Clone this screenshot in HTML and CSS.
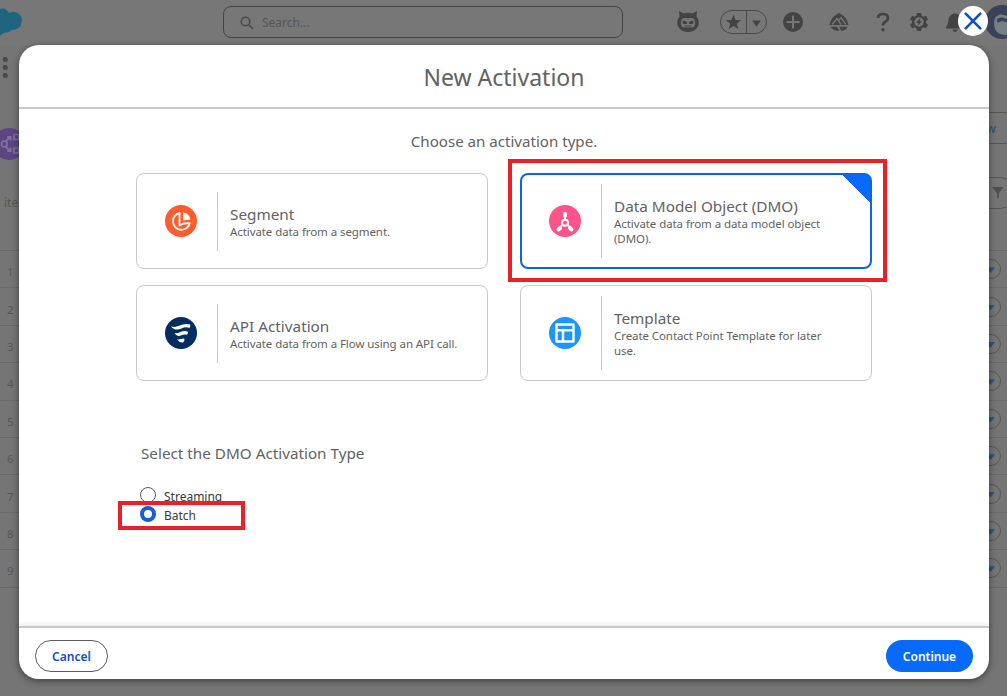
FILE: index.html
```html
<!DOCTYPE html>
<html lang="en">
<head>
  <meta charset="utf-8">
  <title>New Activation</title>
  <link rel="stylesheet" href="styles.css">
</head>
<body>
<div class="page">
  <div class="topbar">
    <svg class="cloud" width="24" height="40" viewBox="0 0 24 40"><path d="M0 9Q6 7 9 13Q15 10 19 14Q23 17 21.500 23Q20 30 12 30Q8 33 4 33Q2 34 0 36Z"/></svg>
    <div class="search">
      <svg width="14" height="14" viewBox="0 0 14 14"><circle cx="5.500" cy="5.500" r="4.300"/><path d="M8.700 8.700L12.800 12.800"/></svg>
      <span>Search...</span>
    </div>
    <div class="tools">
      <svg class="tool-bot" width="24" height="24" viewBox="0 0 24 24"><path d="M3 1L7.500 3.500Q12 2 16.500 3.500L21 1L20.500 6.500Q23.500 10.500 22.500 15Q20 22 12 22Q4 22 1.500 15Q.5 10.500 3.500 6.500Z"/><rect class="cut" x="5" y="8" width="14" height="9.500" rx="4"/><path d="M6.500 10.500L11 11.500V14H7ZM17.500 10.500L13 11.500V14H17Z"/><path d="M8.500 15.500h7v1h-7z"/></svg>
      <div class="fav">
        <svg width="25" height="22" viewBox="0 0 25 22"><path d="M12.500 3.500L14.600 9L20 9.200L15.800 12.700L17.300 18L12.500 15L7.700 18L9.200 12.700L5 9.200L10.400 9Z"/></svg>
        <svg class="fav-more" width="20" height="22" viewBox="0 0 20 22"><path d="M5.500 9.500h9l-4.500 6.500z"/></svg>
      </div>
      <svg class="tool-plus" width="22" height="22" viewBox="0 0 22 22"><circle cx="11" cy="11" r="10"/><path class="cutline" d="M11 4.500v13M4.500 11h13"/></svg>
      <svg class="tool-trail" width="20" height="20" viewBox="0 0 20 20"><path d="M.5 13Q2 4.500 10 1Q18 4.500 19.500 13ZM1.500 14.800h6.500l2.500 4.200Q4 19 1.500 14.800ZM10 14.800h8.500Q16.500 18.500 12.500 19Z"/><path class="cutline thin" d="M3.200 12.500L8 6.500L12 12.500M9.800 8L12 5.800L16.800 12.500"/></svg>
      <svg class="tool-help" width="14" height="20" viewBox="0 0 14 20"><path class="line" d="M2 6Q2 2 7 2Q12 2 12 6Q12 8 9.500 9.700Q7 11 7 13.500"/><circle cx="7" cy="17.700" r="1.800"/></svg>
      <svg class="tool-gear" width="20" height="20" viewBox="0 0 20 20"><path d="M8 1h4l.6 2.700 1.800 1L17 3.800l2 3.400L17 9v2l2 1.800-2 3.400-2.600-.9-1.800 1L12 19H8l-.6-2.700-1.800-1L3 16.200l-2-3.400L3 11V9L1 7.200l2-3.400 2.600.9 1.800-1z"/><circle class="cut" cx="10" cy="10" r="4.700"/><path d="M11.500 6L7 10.700h2.500L8.500 14L13 9.200h-2.500z"/></svg>
      <svg class="tool-bell" width="20" height="20" viewBox="0 0 20 20"><path d="M1 15Q3 13 3.500 8Q4 2 10 1.500Q16 2 16.500 8Q17 13 19 15V16.500H1ZM7.500 17.500h5Q12 20 10 20Q8 20 7.500 17.500Z"/></svg>
      <svg class="avatar" width="22" height="36" viewBox="0 0 22 36"><circle cx="17" cy="18" r="17"/><path class="face" d="M22 12Q14 8 10 14Q8 20 10.500 26Q13 31 22 31Z"/><path d="M12 15Q16 12 22 15V18.500Q16 16 12.500 19Z"/></svg>
    </div>
  </div>
  <div class="navbar"><svg width="8" height="22" viewBox="0 0 8 22"><circle cx="5.300" cy="2.500" r="2.500"/><circle cx="5.300" cy="10.500" r="2.500"/><circle cx="5.300" cy="18.500" r="2.500"/></svg></div>
  <div class="list-head">
    <svg class="object" width="28" height="32" viewBox="0 0 28 32"><circle cx="10" cy="16" r="16"/><path d="M2.500 16a2.800 2.800 0 1 0 5.600 0a2.800 2.800 0 1 0-5.600 0M7 13L11.500 9M8 8.800h3.800V12.500M7 19L11.500 23M8 23.200h3.800V19.500M15 6.500h5v5h-5zM15 20h5v5h-5z"/></svg>
    <div class="pill new">w</div>
  </div>
  <div class="list-tools">
    <span>items</span>
    <div class="pill"><svg width="14" height="14" viewBox="0 0 14 14"><path d="M1 1h12L8 7v5H6V7z"/></svg></div>
  </div>
  <div class="rows">
    <div class="row"><span>1</span><i class="row-menu"></i></div>
    <div class="row"><span>2</span><i class="row-menu"></i></div>
    <div class="row"><span>3</span><i class="row-menu"></i></div>
    <div class="row"><span>4</span><i class="row-menu"></i></div>
    <div class="row"><span>5</span><i class="row-menu"></i></div>
    <div class="row"><span>6</span><i class="row-menu"></i></div>
    <div class="row"><span>7</span><i class="row-menu"></i></div>
    <div class="row"><span>8</span><i class="row-menu"></i></div>
    <div class="row"><span>9</span><i class="row-menu"></i></div>
  </div>
</div>

<div class="modal">
  <div class="modal-header">New Activation</div>
  <div class="modal-body">
    <div class="prompt">Choose an activation type.</div>
    <div class="cards">
      <div class="card">
        <svg width="32" height="32" viewBox="0 0 32 32"><circle cx="16" cy="16" r="16" fill="#ff5d2d"/><path d="M14.500 8A8.500 8.500 0 1 0 24.700 18.200L18.500 18.500L14.500 20.500Z" fill="none" stroke="#fff" stroke-width="1.800" stroke-linejoin="round"/><path d="M18 7.200Q24.500 8.500 25.300 14.600L18 15.600Z" fill="#fff"/></svg>
        <div class="card-text"><div class="card-title">Segment</div><div class="card-desc">Activate data from a segment.</div></div>
      </div>
      <div class="marked">
        <div class="card tall selected">
          <svg width="32" height="32" viewBox="0 0 32 32"><circle cx="16" cy="16" r="16" fill="#ff538a"/><g stroke="#fff" fill="none"><path d="M16 8V14M13.500 20L9 23.500M18.500 20L23 23.500" stroke-width="2"/><circle cx="16" cy="17.700" r="3" stroke-width="1.900"/><path d="M16 8.700V10.500M9.500 24.300L11 23.200M22.500 24.300L21 23.200" stroke-width="4" stroke-linecap="round"/></g></svg>
          <div class="card-text"><div class="card-title">Data Model Object (DMO)</div><div class="card-desc">Activate data from a data model object (DMO).</div></div>
        </div>
      </div>
      <div class="card">
        <svg width="32" height="32" viewBox="0 0 32 32"><circle cx="16" cy="16" r="16" fill="#032d60"/><path d="M6 9.200Q9 10.800 14 8.800Q20 5.800 25 7.500Q26 8.500 24.500 11Q20.500 9.500 16.500 11.500Q9.500 14.500 6 9.200ZM9.500 16Q12 16.500 15 15.200Q19.500 13 23 14.800Q23.500 16 22 17.700Q19 17 16 18.500Q11.500 20.200 9.500 16ZM12 22.200Q14 22.700 16 22Q18.500 21 19.500 22Q19.700 24 18 25.500Q14.500 26 12 22.200Z" fill="#fff"/></svg>
        <div class="card-text"><div class="card-title">API Activation</div><div class="card-desc">Activate data from a Flow using an API call.</div></div>
      </div>
      <div class="card tall">
        <svg width="32" height="32" viewBox="0 0 32 32"><circle cx="16" cy="16" r="16" fill="#1b96ff"/><path d="M7.500 7.500h17v17h-17zM7.500 13.200h17M14 13.200v11.300" fill="none" stroke="#fff" stroke-width="2.400" stroke-linejoin="round"/></svg>
        <div class="card-text"><div class="card-title">Template</div><div class="card-desc">Create Contact Point Template for later use.</div></div>
      </div>
    </div>
    <div class="type">
      <div class="type-label">Select the DMO Activation Type</div>
      <div class="option"><span class="radio"></span>Streaming</div>
      <div class="option marked"><span class="radio checked"></span>Batch</div>
    </div>
  </div>
  <div class="modal-footer">
    <button class="btn">Cancel</button>
    <button class="btn primary">Continue</button>
  </div>
</div>
<button class="close" aria-label="Close"><svg width="18" height="18" viewBox="0 0 18 18"><path d="M1.700 1.700L16.300 16.300M16.300 1.700L1.700 16.300"/></svg></button>
</body>
</html>
```
FILE: styles.css
```css
* {
  box-sizing: border-box;
}
body {
  margin: 0;
  width: 1007px;
  height: 696px;
  overflow: hidden;
  position: relative;
  background: #757575;
  font-family: "Noto Sans", "Open Sans", sans-serif;
  color: #626262;
}
svg {
  display: block;
  flex: none;
}

/* page behind the dialog */
.page {
  height: 696px;
  color: #565656;
}
.topbar {
  height: 45px;
  display: flex;
  align-items: flex-start;
  background: #777;
}
.cloud {
  fill: #1f6580;
}
.search {
  width: 400px;
  height: 32px;
  margin: 6px 0 0 199px;
  padding-left: 16px;
  display: flex;
  align-items: center;
  gap: 8px;
  border: 1px solid #454545;
  border-radius: 8px;
  font-size: 12px;
}
.search svg {
  margin-top: 2px;
  fill: none;
  stroke: #4a4a4a;
  stroke-width: 1.500;
}
.tools {
  flex: 1;
  height: 44px;
  margin-left: 53px;
  display: flex;
  align-items: center;
  fill: #434343;
}
.cut {
  fill: #777;
}
.cutline {
  fill: none;
  stroke: #777;
  stroke-width: 2;
}
.cutline.thin {
  stroke-width: 1.400;
}
.line {
  fill: none;
  stroke: #434343;
  stroke-width: 2.700;
}
.fav {
  width: 47px;
  height: 24px;
  margin-left: 20px;
  display: flex;
  border: 1px solid #484848;
  border-radius: 12px;
}
.fav-more {
  border-left: 1px solid #484848;
}
.tool-plus { margin-left: 15px; }
.tool-trail { margin-left: 25px; }
.tool-help { margin-left: 27px; }
.tool-gear { margin-left: 19px; }
.tool-bell { margin-left: 16px; }
.avatar {
  margin-left: 20px;
  fill: #3a425a;
}
.avatar .face {
  fill: #777f86;
}
.navbar {
  height: 61px;
  padding-top: 12px;
  fill: #484848;
}
.list-head {
  height: 64px;
  padding-top: 6px;
  display: flex;
  justify-content: space-between;
}
.object {
  margin-top: 16px;
  margin-left: -1px;
  fill: #5d4580;
}
.object path {
  fill: none;
  stroke: #8270a0;
  stroke-width: 1.700;
}
.pill {
  width: 40px;
  height: 32px;
  margin-right: -14px;
  display: flex;
  align-items: center;
  justify-content: center;
  border: 1px solid #585858;
  border-radius: 16px;
}
.pill.new {
  width: 60px;
  color: #3a5878;
  font-size: 12px;
  font-weight: 600;
}
.list-tools {
  height: 80px;
  padding: 7px 0 0 4px;
  display: flex;
  justify-content: space-between;
  font-size: 12px;
  fill: #505050;
}
.list-tools span {
  padding-top: 17px;
}
.list-tools .pill {
  width: 50px;
  margin-right: -9px;
}
.list-tools .pill svg {
  margin-left: 13px;
}
.rows {
  border-bottom: 1px solid #696969;
}
.row {
  height: 37.400px;
  padding: 0 6px 0 7px;
  display: flex;
  align-items: center;
  justify-content: space-between;
  border-top: 1px solid #696969;
  font-size: 11.500px;
}
.row span {
  padding-top: 5px;
}
.row-menu {
  width: 20px;
  height: 20px;
  padding: 7px 0 0 4px;
  border: 1px solid #555;
  border-radius: 50%;
}
.row-menu::before {
  content: "";
  display: block;
  width: 9px;
  height: 6px;
  background: #35507c;
  clip-path: polygon(0 0, 100% 0, 50% 100%);
}

/* dialog */
.modal {
  position: absolute;
  left: 19px;
  top: 45px;
  width: 970px;
  height: 634px;
  display: flex;
  flex-direction: column;
  background: #fff;
  border-radius: 20px;
  box-shadow: 0 2px 7px rgba(0, 0, 0, .45);
}
.modal-header {
  height: 64px;
  border-bottom: 2px solid #c9c9c9;
  text-align: center;
  font-size: 23px;
  line-height: 65px;
}
.modal-body {
  flex: 1;
  padding: 21px 117px 0;
}
.prompt {
  height: 43px;
  text-align: center;
  font-size: 15.100px;
  line-height: 22px;
}
.cards {
  display: grid;
  grid-template-columns: 352px 352px;
  grid-auto-rows: 96px;
  gap: 16px 32px;
}
.card {
  height: 96px;
  padding-left: 28px;
  display: flex;
  align-items: center;
  gap: 20px;
  border: 1px solid #c9c9c9;
  border-radius: 8px;
}
.card-text {
  width: 246px;
  height: 59px;
  padding: 2px 0 0 12px;
  display: flex;
  flex-direction: column;
  justify-content: center;
  border-left: 1px solid #c9c9c9;
}
.tall .card-text {
  height: 74px;
  padding-top: 0;
}
.card-title {
  font-size: 15.300px;
  line-height: 19px;
}
.card-desc {
  width: 232px;
  font-size: 11.500px;
  letter-spacing: -.08px;
  line-height: 15px;
}
.tall .card-desc {
  width: 215px;
}
.selected {
  padding-left: 27px;
  border: 2px solid #0b66dd;
  background: linear-gradient(45deg, transparent 50%, #066afe 50%) top right / 28px 28px no-repeat;
}
.marked {
  position: relative;
}
/* red call-out frames */
.marked::after {
  content: "";
  position: absolute;
  inset: -14px -15px -13px -12px;
  border: 4px solid #e8202a;
}
.type {
  padding: 60px 0 0 5px;
}
.type-label {
  height: 46px;
  font-size: 15.250px;
  line-height: 24px;
}
.option {
  width: 84px;
  height: 19px;
  display: flex;
  align-items: center;
  gap: 8px;
  color: #3a3a3a;
  font-size: 12px;
  line-height: 19px;
}
.option.marked::after {
  inset: -5px -20px -5px -23px;
}
.radio {
  width: 16px;
  height: 16px;
  margin: 0 0 3px -1px;
  border: 1px solid #5c5c5c;
  border-radius: 50%;
}
.radio.checked {
  border: 4px solid #1260d6;
}
.modal-footer {
  height: 53px;
  padding: 0 16px;
  display: flex;
  align-items: center;
  justify-content: space-between;
  border-top: 2px solid #c9c9c9;
  box-shadow: 0 -2px 4px rgba(0, 0, 0, .08);
  border-radius: 0 0 20px 20px;
}
.btn {
  width: 73px;
  height: 32px;
  margin-top: 4px;
  padding: 2px 0 0;
  border: 1px solid #5c5c5c;
  border-radius: 16px;
  background: #fff;
  color: #0b50c8;
  font: 600 12px "Noto Sans", "Open Sans", sans-serif;
}
.btn.primary {
  width: 87px;
  border: 0;
  background: #066afe;
  color: #fff;
}
.close {
  position: absolute;
  left: 958px;
  top: 6px;
  width: 30px;
  height: 30px;
  padding: 6px;
  border: 0;
  border-radius: 50%;
  background: #fff;
}
.close path {
  stroke: #0b50c8;
  stroke-width: 2.600;
  stroke-linecap: round;
}
```
